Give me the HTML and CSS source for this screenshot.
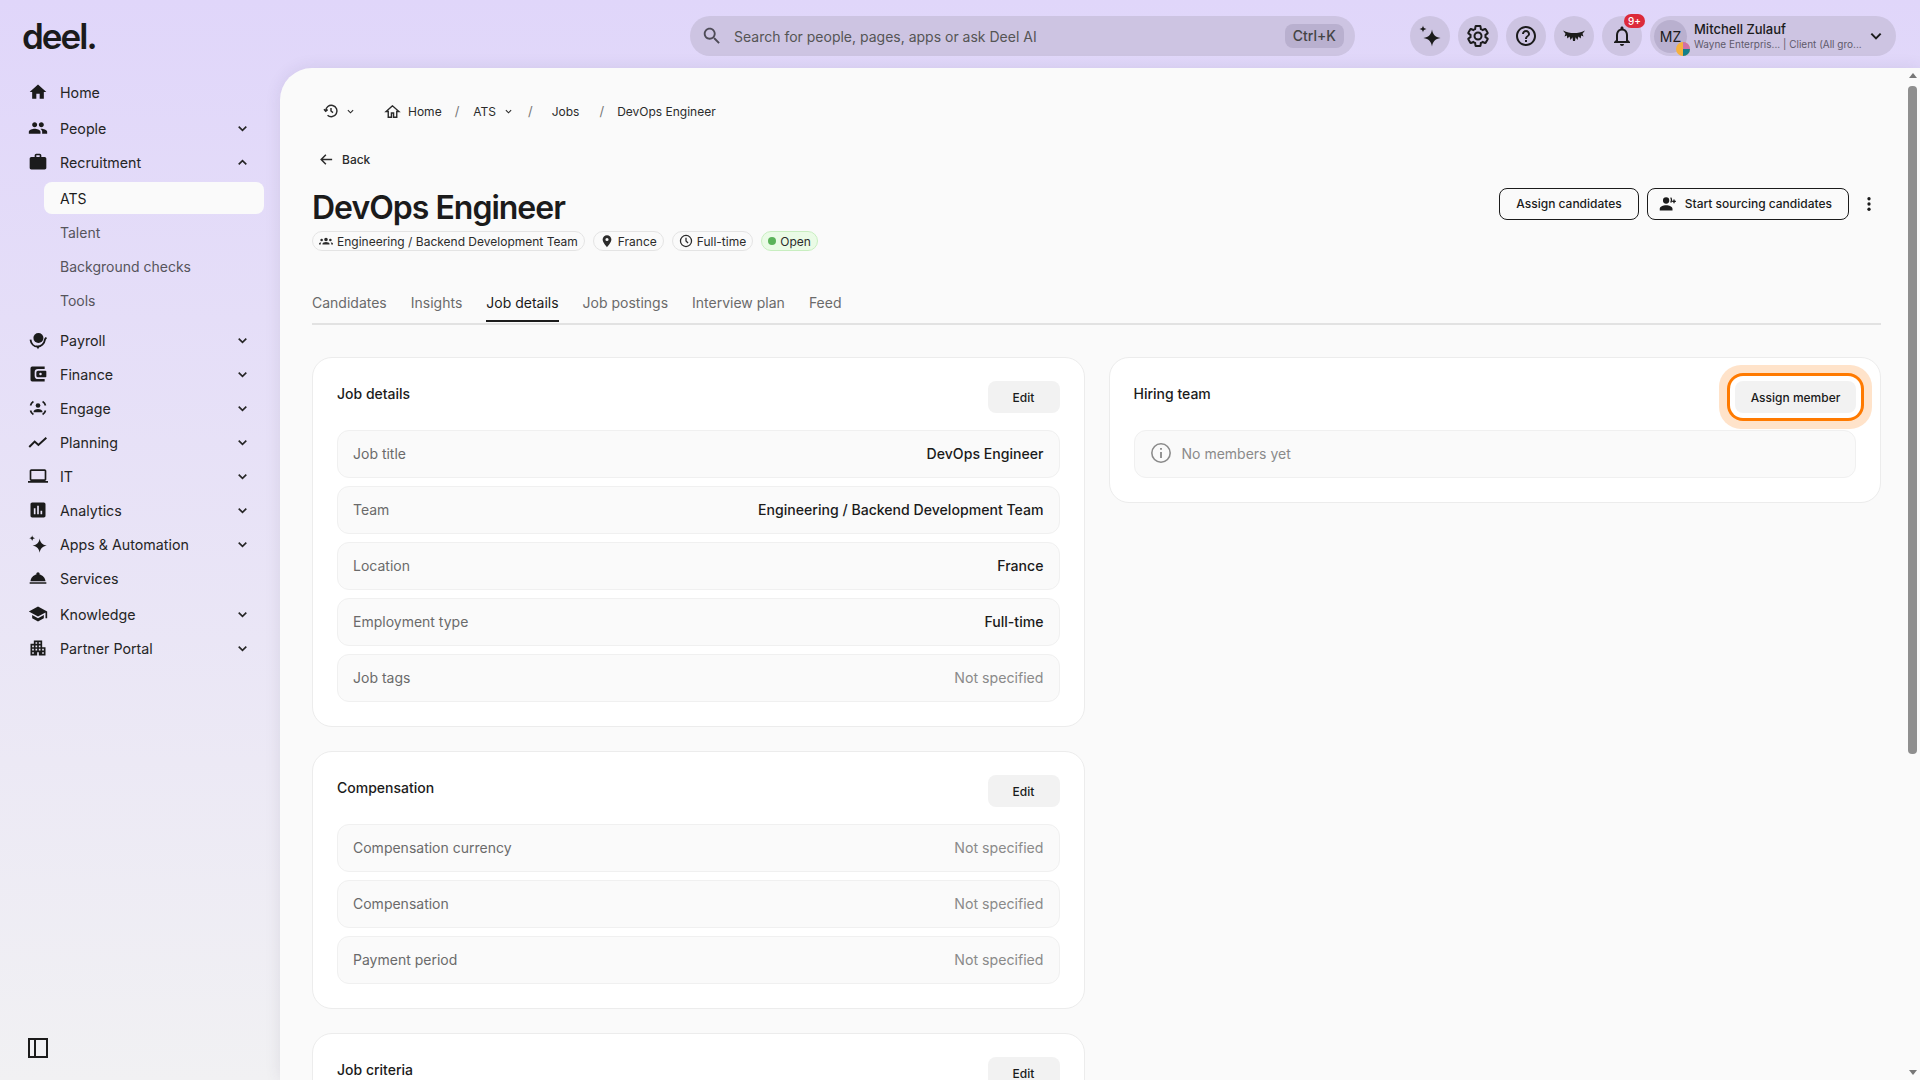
FILE: index.html
```html
<!DOCTYPE html>
<html lang="en">

<head>
    <meta charset="UTF-8">
    <meta name="viewport" content="width=device-width, initial-scale=1.0">
    <link rel="stylesheet" href="styles.css">
    <title>DevOps Engineer</title>
</head>

<body>
    <svg class="sprite">
        <symbol id="i-chev" viewBox="0 0 24 24"><path d="M5 8.500l7 7 7-7" fill="none" stroke="currentColor" stroke-width="3"/></symbol>
        <symbol id="i-sparkle" viewBox="0 0 24 24"><path d="M14 5.500c.8 5 3 7.500 8.500 8.500-5.500 1-7.700 3.500-8.500 8.500-.8-5-3-7.500-8.500-8.500 5.500-1 7.700-3.500 8.500-8.500zM5 1.500c.4 2.300 1.200 3.100 3.500 3.500-2.300.4-3.100 1.200-3.500 3.500-.4-2.300-1.200-3.100-3.500-3.500 2.300-.4 3.100-1.200 3.500-3.500z"/></symbol>
    </svg>

    <div class="app">
        <header class="topbar">
            <div class="logo">deel.</div>
            <div class="search">
                <svg class="search-icon" viewBox="0 0 24 24"><path d="M15.500 14h-.79l-.28-.27C15.410 12.590 16 11.110 16 9.500 16 5.910 13.090 3 9.500 3S3 5.910 3 9.500 5.910 16 9.500 16c1.610 0 3.090-.59 4.230-1.570l.27.28v.79l5 4.990L20.490 19l-4.990-5zm-6 0C7.010 14 5 11.990 5 9.500S7.010 5 9.500 5 14 7.010 14 9.500 11.990 14 9.500 14z"/></svg>
                <span class="search-text">Search for people, pages, apps or ask Deel AI</span>
                <span class="kbd">Ctrl+K</span>
            </div>
            <div class="top-actions">
                <div class="round-btn"><svg viewBox="0 0 24 24"><use href="#i-sparkle"/></svg></div>
                <div class="round-btn"><svg viewBox="0 0 24 24"><path fill="none" stroke="currentColor" stroke-width="2" d="M19.430 12.980c.04-.32.07-.64.07-.98s-.03-.66-.07-.98l2.110-1.650c.19-.15.24-.42.12-.64l-2-3.460c-.12-.22-.39-.3-.61-.22l-2.490 1c-.52-.4-1.080-.73-1.690-.98l-.38-2.650C14.460 2.180 14.250 2 14 2h-4c-.25 0-.46.18-.49.42l-.38 2.650c-.61.25-1.170.59-1.690.98l-2.490-1c-.23-.09-.49 0-.61.22l-2 3.460c-.13.22-.07.49.12.64l2.110 1.650c-.04.32-.07.65-.07.98s.03.66.07.98l-2.110 1.650c-.19.15-.24.42-.12.64l2 3.460c.12.22.39.3.61.22l2.490-1c.52.4 1.080.73 1.690.98l.38 2.650c.03.24.24.42.49.42h4c.25 0 .46-.18.49-.42l.38-2.650c.61-.25 1.170-.59 1.690-.98l2.490 1c.23.09.49 0 .61-.22l2-3.460c.12-.22.07-.49-.12-.64zM12 15.500c-1.930 0-3.500-1.570-3.500-3.500s1.570-3.500 3.500-3.500 3.500 1.570 3.500 3.500-1.570 3.500-3.500 3.500z"/></svg></div>
                <div class="round-btn"><svg viewBox="0 0 24 24"><path d="M11 18h2v-2h-2v2zm1-16C6.480 2 2 6.480 2 12s4.480 10 10 10 10-4.480 10-10S17.520 2 12 2zm0 18c-4.410 0-8-3.590-8-8s3.590-8 8-8 8 3.590 8 8-3.590 8-8 8zm0-14c-2.210 0-4 1.790-4 4h2c0-1.100.9-2 2-2s2 .9 2 2c0 2-3 1.750-3 5h2c0-2.250 3-2.500 3-5 0-2.210-1.790-4-4-4z"/></svg></div>
                <div class="round-btn"><svg viewBox="0 0 24 24"><path d="M1 6.500C5 8.500 8 9 12 9s7-.5 11-2.500l-2.500 3.300 1 2.700-2.400-1-.4 3-2.300-2-.9 3.500-2-2.800L13 17h-2l-.5-3.800-2 2.800-.9-3.500-2.300 2-.4-3-2.400 1 1-2.700z"/></svg></div>
                <div class="round-btn bell">
                    <svg viewBox="0 0 24 24"><path d="M12 22c1.100 0 2-.9 2-2h-4c0 1.100.89 2 2 2zm6-6v-5c0-3.070-1.640-5.640-4.500-6.320V4c0-.83-.67-1.500-1.500-1.500s-1.500.67-1.500 1.500v.68C7.630 5.360 6 7.920 6 11v5l-2 2v1h16v-1l-2-2zm-2 1H8v-6c0-2.480 1.510-4.500 4-4.500s4 2.020 4 4.500v6z"/></svg>
                    <span class="badge">9+</span>
                </div>
                <div class="profile">
                    <div class="avatar">MZ
                        <svg class="org-dot" viewBox="0 0 14 14">
                            <circle cx="7" cy="7" r="7" fill="#f5b13d"/>
                            <path d="M7 7h7a7 7 0 0 1-7 7z" fill="#14808a"/>
                            <path d="M7 0a7 7 0 0 1 7 7H7z" fill="#cf6fa8"/>
                        </svg>
                    </div>
                    <div class="profile-text">
                        <div class="profile-name">Mitchell Zulauf</div>
                        <div class="profile-sub">Wayne Enterpris... | Client (All gro...</div>
                    </div>
                    <svg class="profile-chev" viewBox="0 0 24 24"><use href="#i-chev"/></svg>
                </div>
            </div>
        </header>

        <nav class="sidebar">
            <a class="nav-item"><svg class="nav-icon" viewBox="0 0 24 24"><path d="M10 20v-6h4v6h5v-8h3L12 3 2 12h3v8z"/></svg>Home</a>
            <a class="nav-item has-sub people"><svg class="nav-icon" viewBox="0 0 24 24"><path d="M16 11c1.660 0 2.990-1.340 2.990-3S17.660 5 16 5c-1.660 0-3 1.340-3 3s1.340 3 3 3zm-8 0c1.660 0 2.990-1.340 2.990-3S9.660 5 8 5C6.340 5 5 6.340 5 8s1.340 3 3 3zm0 2c-2.330 0-7 1.170-7 3.500V19h14v-2.500c0-2.330-4.670-3.500-7-3.500zm8 0c-.29 0-.62.02-.97.05 1.160.84 1.970 1.970 1.970 3.450V19h6v-2.500c0-2.330-4.670-3.500-7-3.500z"/></svg>People<svg class="nav-chev" viewBox="0 0 24 24"><use href="#i-chev"/></svg></a>
            <a class="nav-item has-sub"><svg class="nav-icon" viewBox="0 0 24 24"><path d="M20 6h-4V4c0-1.110-.89-2-2-2h-4c-1.110 0-2 .89-2 2v2H4c-1.110 0-1.990.89-1.990 2L2 19c0 1.110.89 2 2 2h16c1.110 0 2-.89 2-2V8c0-1.110-.89-2-2-2zm-6 0h-4V4h4v2z"/></svg>Recruitment<svg class="nav-chev up" viewBox="0 0 24 24"><use href="#i-chev"/></svg></a>
            <a class="sub-item active">ATS</a>
            <a class="sub-item">Talent</a>
            <a class="sub-item">Background checks</a>
            <a class="sub-item last">Tools</a>
            <a class="nav-item has-sub"><svg class="nav-icon" viewBox="0 0 24 24"><circle cx="12.500" cy="9.500" r="6"/><path d="M3 11.500c.6 5 4 8.500 8.500 8.500 4.200 0 8.200-3.500 9-9l1.500-2" fill="none" stroke="currentColor" stroke-width="2.200"/><path d="M9.500 19h5L12 23z"/></svg>Payroll<svg class="nav-chev" viewBox="0 0 24 24"><use href="#i-chev"/></svg></a>
            <a class="nav-item has-sub"><svg class="nav-icon" viewBox="0 0 24 24"><path d="M5 3h15v3h-8a4 4 0 0 0-4 4v4a4 4 0 0 0 4 4h8v3H5a2 2 0 0 1-2-2V5a2 2 0 0 1 2-2zm7 5h9a1 1 0 0 1 1 1v6a1 1 0 0 1-1 1h-9a2 2 0 0 1-2-2v-4a2 2 0 0 1 2-2zm3 2.500a1.500 1.500 0 1 0 0 3 1.500 1.500 0 0 0 0-3z"/></svg>Finance<svg class="nav-chev" viewBox="0 0 24 24"><use href="#i-chev"/></svg></a>
            <a class="nav-item has-sub"><svg class="nav-icon" viewBox="0 0 24 24"><circle cx="12" cy="9" r="2.800"/><path d="M6.500 17c0-2.400 3-3.800 5.500-3.800s5.500 1.400 5.500 3.800z"/><path d="M3 9c.5-2.300 1.700-3.700 3.500-4.800M21 9c-.5-2.300-1.700-3.700-3.500-4.800M3 15c.5 2.300 1.700 3.700 3.500 4.800M21 15c-.5 2.300-1.700 3.700-3.500 4.800" fill="none" stroke="currentColor" stroke-width="2"/></svg>Engage<svg class="nav-chev" viewBox="0 0 24 24"><use href="#i-chev"/></svg></a>
            <a class="nav-item has-sub"><svg class="nav-icon" viewBox="0 0 24 24"><path d="M1.500 18l6.500-6.500 4.500 4L22 7" fill="none" stroke="currentColor" stroke-width="2.400"/></svg>Planning<svg class="nav-chev" viewBox="0 0 24 24"><use href="#i-chev"/></svg></a>
            <a class="nav-item has-sub"><svg class="nav-icon" viewBox="0 0 24 24"><path d="M20 18c1.100 0 1.990-.9 1.990-2L22 6c0-1.100-.9-2-2-2H4c-1.100 0-2 .9-2 2v10c0 1.100.9 2 2 2H0v2h24v-2h-4zM4 6h16v10H4V6z"/></svg>IT<svg class="nav-chev" viewBox="0 0 24 24"><use href="#i-chev"/></svg></a>
            <a class="nav-item has-sub"><svg class="nav-icon" viewBox="0 0 24 24"><path d="M19 3H5c-1.100 0-2 .9-2 2v14c0 1.100.9 2 2 2h14c1.100 0 2-.9 2-2V5c0-1.100-.9-2-2-2zM9 17H7v-7h2v7zm4 0h-2V7h2v10zm4 0h-2v-4h2v4z"/></svg>Analytics<svg class="nav-chev" viewBox="0 0 24 24"><use href="#i-chev"/></svg></a>
            <a class="nav-item has-sub"><svg class="nav-icon" viewBox="0 0 24 24"><use href="#i-sparkle"/></svg>Apps &amp; Automation<svg class="nav-chev" viewBox="0 0 24 24"><use href="#i-chev"/></svg></a>
            <a class="nav-item"><svg class="nav-icon" viewBox="0 0 24 24"><path d="M2 17h20v2H2zm11.840-9.210c.1-.24.16-.51.16-.79 0-1.100-.9-2-2-2s-2 .9-2 2c0 .28.06.55.16.79C6.250 8.600 3.270 11.930 3 16h18c-.27-4.070-3.250-7.400-7.160-8.210z"/></svg>Services</a>
            <a class="nav-item has-sub gap-top"><svg class="nav-icon" viewBox="0 0 24 24"><path d="M5 13.180v4L12 21l7-3.820v-4L12 17l-7-3.820zM12 3L1 9l11 6 9-4.910V17h2V9L12 3z"/></svg>Knowledge<svg class="nav-chev" viewBox="0 0 24 24"><use href="#i-chev"/></svg></a>
            <a class="nav-item has-sub"><svg class="nav-icon" viewBox="0 0 24 24"><path d="M17 11V3H7v4H3v14h8v-4h2v4h8V11h-4zM7 19H5v-2h2v2zm0-4H5v-2h2v2zm0-4H5V9h2v2zm4 4H9v-2h2v2zm0-4H9V9h2v2zm0-4H9V5h2v2zm4 8h-2v-2h2v2zm0-4h-2V9h2v2zm0-4h-2V5h2v2zm4 12h-2v-2h2v2zm0-4h-2v-2h2v2z"/></svg>Partner Portal<svg class="nav-chev" viewBox="0 0 24 24"><use href="#i-chev"/></svg></a>
            <div class="collapse"><svg viewBox="0 0 20 20"><path d="M1 1h18v18H1zM7 1v18" fill="none" stroke="currentColor" stroke-width="2"/></svg></div>
        </nav>

        <main class="main">
            <div class="content">
                <div class="crumbs">
                    <svg class="crumb-history" viewBox="0 0 24 24"><path d="M4 12a8.500 8.500 0 1 1 2.800 6.300M1.500 9.500L4 12.500l3-2.500M12 7.500V12l3 2.500" fill="none" stroke="currentColor" stroke-width="2.200"/></svg>
                    <svg class="crumb-chev" viewBox="0 0 24 24"><use href="#i-chev"/></svg>
                    <svg class="crumb-home" viewBox="0 0 24 24"><path d="M12 4L3 12h3v8h4.500v-6h3v6H18v-8h3z" fill="none" stroke="currentColor" stroke-width="2"/></svg>
                    <span>Home</span>
                    <span class="sep sep-home">/</span>
                    <span>ATS</span>
                    <svg class="crumb-chev ats" viewBox="0 0 24 24"><use href="#i-chev"/></svg>
                    <span class="sep sep-ats">/</span>
                    <span>Jobs</span>
                    <span class="sep sep-jobs">/</span>
                    <span>DevOps Engineer</span>
                </div>

                <div class="back">
                    <svg viewBox="0 0 24 24"><path d="M21 12H4M11 4.500L3.500 12l7.500 7.500" fill="none" stroke="currentColor" stroke-width="2.400"/></svg>
                    Back
                </div>

                <div class="title-row">
                    <h1>DevOps Engineer</h1>
                    <div class="title-actions">
                        <button class="btn-outline">Assign candidates</button>
                        <button class="btn-outline btn-icon">
                            <svg viewBox="0 0 24 24"><path d="M9.500 11.500a4.200 4.200 0 1 0 0-8.400 4.200 4.200 0 0 0 0 8.400zM1 20.500v-2.200c0-3 4.500-4.800 8.500-4.800s8.500 1.800 8.500 4.800v2.200z"/><path d="M15.500 3.500c1.500 1.500 1.500 5 0 6.500M20 6v5M17.500 8.500h5" fill="none" stroke="currentColor" stroke-width="1.800"/></svg>
                            Start sourcing candidates
                        </button>
                        <svg class="kebab" viewBox="0 0 24 24"><circle cx="12" cy="5" r="2.200"/><circle cx="12" cy="12" r="2.200"/><circle cx="12" cy="19" r="2.200"/></svg>
                    </div>
                </div>

                <div class="tags">
                    <span class="tag"><svg viewBox="0 0 24 24"><path d="M12 12.500c1.700 0 3-1.300 3-3s-1.300-3-3-3-3 1.300-3 3 1.300 3 3 3zM4.500 12.500a2.200 2.200 0 1 0 0-4.400 2.200 2.200 0 0 0 0 4.400zM19.500 12.500a2.200 2.200 0 1 0 0-4.400 2.200 2.200 0 0 0 0 4.400zM6 18v-1.500c0-1.500 3-2.800 6-2.800s6 1.300 6 2.800V18zM0 18v-1.400c0-1.200 1.800-2 4-2.100-.6.500-1 1.100-1 2V18zM24 18v-1.400c0-1.200-1.800-2-4-2.100.6.500 1 1.100 1 2V18z"/></svg>Engineering / Backend Development Team</span>
                    <span class="tag"><svg viewBox="0 0 24 24"><path d="M12 2a7.500 7.500 0 0 0-7.500 7.500C4.500 15 12 22.500 12 22.500S19.500 15 19.500 9.500A7.500 7.500 0 0 0 12 2zm0 10.200a2.700 2.700 0 1 1 0-5.400 2.700 2.700 0 0 1 0 5.400z"/></svg>France</span>
                    <span class="tag"><svg viewBox="0 0 24 24"><circle cx="12" cy="12" r="9.500" fill="none" stroke="currentColor" stroke-width="2.200"/><path d="M12 6.500V12l3.500 3.500" fill="none" stroke="currentColor" stroke-width="2.200"/></svg>Full-time</span>
                    <span class="tag tag-open"><i class="dot"></i>Open</span>
                </div>

                <div class="tabs">
                    <a class="tab">Candidates</a>
                    <a class="tab">Insights</a>
                    <a class="tab active">Job details</a>
                    <a class="tab">Job postings</a>
                    <a class="tab">Interview plan</a>
                    <a class="tab">Feed</a>
                </div>

                <div class="columns">
                    <div class="col">
                        <section class="card">
                            <div class="card-head">
                                <h3>Job details</h3>
                                <button class="btn-soft btn-edit">Edit</button>
                            </div>
                            <div class="rows">
                                <div class="row"><span>Job title</span><b>DevOps Engineer</b></div>
                                <div class="row"><span>Team</span><b>Engineering / Backend Development Team</b></div>
                                <div class="row"><span>Location</span><b>France</b></div>
                                <div class="row"><span>Employment type</span><b>Full-time</b></div>
                                <div class="row"><span>Job tags</span><em>Not specified</em></div>
                            </div>
                        </section>
                        <section class="card">
                            <div class="card-head">
                                <h3>Compensation</h3>
                                <button class="btn-soft btn-edit">Edit</button>
                            </div>
                            <div class="rows">
                                <div class="row"><span>Compensation currency</span><em>Not specified</em></div>
                                <div class="row"><span>Compensation</span><em>Not specified</em></div>
                                <div class="row"><span>Payment period</span><em>Not specified</em></div>
                            </div>
                        </section>
                        <section class="card">
                            <div class="card-head">
                                <h3>Job criteria</h3>
                                <button class="btn-soft btn-edit">Edit</button>
                            </div>
                        </section>
                    </div>
                    <div class="col">
                        <section class="card">
                            <div class="card-head">
                                <h3>Hiring team</h3>
                                <button class="btn-soft btn-assign">Assign member</button>
                            </div>
                            <div class="row row-empty">
                                <svg viewBox="0 0 24 24"><circle cx="12" cy="12" r="10" fill="none" stroke="currentColor" stroke-width="1.700"/><path d="M12 11v6.500M12 6.500v2" fill="none" stroke="currentColor" stroke-width="2"/></svg>
                                No members yet
                            </div>
                        </section>
                    </div>
                </div>
            </div>

            <div class="scrollbar">
                <i class="arrow arrow-up"></i>
                <div class="track"><div class="thumb"></div></div>
                <i class="arrow arrow-down"></i>
            </div>
        </main>
    </div>
</body>

</html>
```

FILE: styles.css
```css
* {
    margin: 0;
    padding: 0;
    box-sizing: border-box;
}

html, body {
    height: 100%;
    overflow: hidden;
}

body {
    font-family: Inter, "Liberation Sans", sans-serif;
    color: #1b1b1b;
    background: linear-gradient(to bottom, #e0d6fa 0%, #f1f1f3 100%);
}

svg {
    fill: currentColor;
    flex: none;
}

.sprite {
    display: none;
}

.app {
    height: 100vh;
    display: grid;
    grid-template-columns: 280px 1fr;
    grid-template-rows: 68px 1fr;
}

/* top bar */
.topbar {
    grid-column: 1 / 3;
    display: flex;
    align-items: center;
    padding: 4px 24px 0 22px;
}

.logo {
    width: 668px;
    font-size: 35px;
    font-weight: 600;
    letter-spacing: -2px;
    line-height: 36px;
    margin-top: -1px;
}

.search {
    width: 665px;
    height: 40px;
    padding: 0 11px 0 11px;
    border-radius: 20px;
    background-color: #cdc4e2;
    display: flex;
    align-items: center;
    font-size: 14px;
    color: #555;
}

.search-icon {
    width: 22px;
    height: 22px;
    color: #4e4b57;
}

.search-text {
    margin-left: 11px;
    flex: 1;
}

.kbd {
    padding: 0 8px;
    height: 24px;
    line-height: 24px;
    border-radius: 8px;
    background-color: #b9b0cf;
    font-weight: 500;
    color: #444;
}

.top-actions {
    margin-left: 55px;
    display: flex;
    align-items: center;
    gap: 8px;
}

.round-btn {
    position: relative;
    width: 40px;
    height: 40px;
    border-radius: 50%;
    background-color: #cdc4e2;
    display: flex;
    align-items: center;
    justify-content: center;
}

.round-btn svg {
    width: 24px;
    height: 24px;
}

.badge {
    position: absolute;
    top: -2px;
    right: -3px;
    height: 14px;
    padding: 0 4px;
    border-radius: 7px;
    background-color: #dc2a3a;
    color: white;
    font-size: 10px;
    font-weight: 500;
    line-height: 14px;
}

.profile {
    width: 246px;
    height: 40px;
    border-radius: 20px;
    background-color: #cdc4e2;
    display: flex;
    align-items: center;
    padding: 0 12px 0 4px;
}

.avatar {
    position: relative;
    width: 33px;
    height: 33px;
    border-radius: 50%;
    background-color: #b9b0cf;
    font-size: 14px;
    display: flex;
    align-items: center;
    justify-content: center;
}

.org-dot {
    position: absolute;
    right: -3px;
    bottom: -3px;
    width: 14px;
    height: 14px;
}

.profile-text {
    margin-left: 7px;
    flex: 1;
    min-width: 0;
}

.profile-name {
    font-size: 13px;
    line-height: 16px;
    font-weight: 500;
}

.profile-sub {
    font-size: 10px;
    line-height: 14px;
    color: #5f5a6b;
    white-space: nowrap;
}

.profile-chev {
    width: 16px;
    height: 16px;
}

/* sidebar */
.sidebar {
    padding: 7px 16px 0 28px;
    display: flex;
    flex-direction: column;
    min-height: 0;
}

.nav-item {
    height: 34px;
    display: flex;
    align-items: center;
    font-size: 14.25px;
    color: #252525;
    flex: none;
}

.nav-item.people {
    margin-top: 2px;
}

.nav-icon {
    width: 20px;
    height: 20px;
    margin-right: 12px;
    color: #1b1b1b;
}

.has-sub .nav-chev {
    margin-left: auto;
    margin-right: 15px;
}

.nav-chev {
    width: 13px;
    height: 13px;
}

.nav-chev.up {
    transform: rotate(180deg);
}

.gap-top {
    margin-top: 2px;
}

.sub-item {
    height: 32px;
    margin: 2px 0 0 16px;
    padding-left: 16px;
    border-radius: 8px;
    display: flex;
    align-items: center;
    font-size: 14px;
    color: #56545c;
    flex: none;
}

.sub-item.active {
    margin-top: 3px;
    background-color: #fafafa;
    color: #1b1b1b;
}

.sub-item.last {
    margin-bottom: 7px;
}

.collapse {
    margin-top: auto;
    margin-bottom: 22px;
    height: 20px;
}

.collapse svg {
    width: 20px;
    height: 20px;
}

/* main panel */
.main {
    display: flex;
    min-height: 0;
    overflow: hidden;
    background-color: #fafafa;
    border-top-left-radius: 32px;
    box-shadow: 0 0 16px rgba(60, 50, 90, 0.1);
}

.content {
    flex: 1;
    min-width: 0;
    padding: 35px 24px 0 32px;
}

.crumbs {
    height: 16px;
    display: flex;
    align-items: center;
    font-size: 12px;
    color: #2b2b2b;
}

.crumb-history {
    width: 16px;
    height: 16px;
    margin-left: 11px;
}

.crumb-chev {
    width: 9px;
    height: 9px;
    margin-left: 7px;
}

.crumb-home {
    width: 17px;
    height: 17px;
    margin: 0 7px 0 29px;
}

.crumb-chev.ats {
    margin-left: 8px;
}

.sep {
    color: #777;
    font-size: 13px;
}

.sep-home {
    margin: 0 14px 0 13px;
}

.sep-ats {
    margin: 0 19px 0 15px;
}

.sep-jobs {
    margin: 0 13px 0 20px;
}

.back {
    margin-top: 32px;
    height: 16px;
    padding-left: 7px;
    display: flex;
    align-items: center;
    gap: 8px;
    font-size: 12px;
    font-weight: 500;
    color: #2b2b2b;
}

.back svg {
    width: 15px;
    height: 15px;
}

.title-row {
    margin-top: 19px;
    height: 44px;
    display: flex;
    align-items: center;
    justify-content: space-between;
}

h1 {
    font-size: 32px;
    font-weight: 600;
    letter-spacing: -1px;
    line-height: 44px;
}

.title-actions {
    display: flex;
    align-items: center;
    gap: 8px;
    margin-top: -9px;
}

button {
    font-family: inherit;
    color: #1b1b1b;
    cursor: pointer;
}

.btn-outline {
    height: 32px;
    padding: 0 16px;
    border: 1px solid #1b1b1b;
    border-radius: 8px;
    background: transparent;
    font-size: 12px;
    font-weight: 500;
    display: flex;
    align-items: center;
    gap: 8px;
}

.btn-icon {
    padding-left: 11px;
}

.btn-outline svg {
    width: 18px;
    height: 18px;
}

.kebab {
    width: 18px;
    height: 18px;
    margin: 0 3px;
}

.tags {
    margin-top: 1px;
    display: flex;
    gap: 8px;
}

.tag {
    height: 20px;
    padding: 0 6px 0 6px;
    border: 1px solid #e4e4e4;
    border-radius: 10px;
    display: flex;
    align-items: center;
    gap: 4px;
    font-size: 12px;
    color: #2b2b2b;
}

.tag svg {
    width: 14px;
    height: 14px;
}

.tag-open {
    background-color: #eafbe6;
    border-color: #c8eec0;
}

.dot {
    width: 8px;
    height: 8px;
    border-radius: 50%;
    background-color: #5bb35a;
}

.tabs {
    margin-top: 32px;
    height: 42px;
    display: flex;
    gap: 24px;
    border-bottom: 2px solid #e2e2e2;
}

.tab {
    height: 41px;
    padding-top: 10px;
    font-size: 14px;
    color: #6a6a6a;
    line-height: 20px;
}

.tab.active {
    color: #1b1b1b;
    border-bottom: 2px solid #1b1b1b;
    height: 39px;
}

.columns {
    margin-top: 32px;
    display: grid;
    grid-template-columns: 1fr 1fr;
    gap: 24px;
    align-items: start;
}

.col {
    display: flex;
    flex-direction: column;
    gap: 24px;
}

.card {
    padding: 23px 24px 24px;
    border: 1px solid #ececec;
    border-radius: 20px;
    background-color: white;
}

.card-head {
    height: 49px;
    display: flex;
    justify-content: space-between;
    align-items: flex-start;
}

h3 {
    font-size: 14px;
    font-weight: 500;
    line-height: 20px;
    margin-top: 3px;
}

.btn-soft {
    height: 32px;
    border: none;
    border-radius: 8px;
    background-color: #f2f2f2;
    font-size: 12px;
    font-weight: 500;
}

.btn-edit {
    width: 72px;
}

.btn-assign {
    width: 121px;
    box-shadow: 0 0 0 5px white, 0 0 0 8px #ff7a00, 0 0 0 16px #ffe3ca;
    border-radius: 8px;
}

.rows {
    display: flex;
    flex-direction: column;
    gap: 8px;
}

.row {
    height: 48px;
    padding: 0 15px 2px;
    border: 1px solid #f0f0f0;
    border-radius: 12px;
    background-color: #fafafa;
    display: flex;
    align-items: center;
    justify-content: space-between;
    font-size: 14px;
    color: #6a6a6a;
}

.row b {
    font-size: 14.1px;
    font-weight: 500;
    color: #1b1b1b;
}

.row em {
    font-size: 14.15px;
    font-style: normal;
    color: #8a8a8a;
}

.row-empty {
    justify-content: flex-start;
    gap: 10px;
    color: #8a8a8a;
}

.row-empty svg {
    width: 22px;
    height: 22px;
}

/* scrollbar */
.scrollbar {
    width: 15px;
    display: flex;
    flex-direction: column;
    align-items: center;
    flex: none;
}

.arrow {
    width: 0;
    height: 0;
    margin: 5px 0;
    border-left: 4px solid transparent;
    border-right: 4px solid transparent;
    flex: none;
}

.arrow-up {
    border-bottom: 5px solid #777;
}

.arrow-down {
    border-top: 5px solid #777;
}

.track {
    flex: 1;
    width: 100%;
    padding: 3px 3px 0 3px;
}

.thumb {
    height: 668px;
    border-radius: 4px;
    background-color: #8f8f8f;
}
```
